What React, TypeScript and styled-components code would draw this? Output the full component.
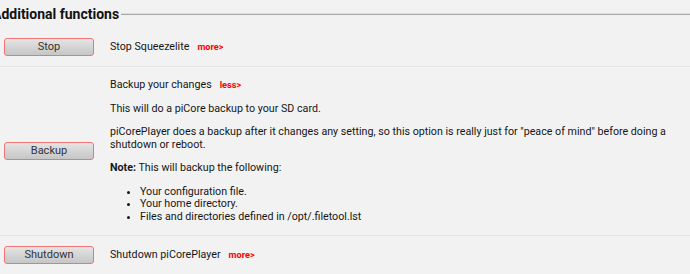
import React from "react";
import styled, { createGlobalStyle } from "styled-components";

const Global = createGlobalStyle`
  html, body { margin: 0; padding: 0; background: #f2f2f2; }
  body { font-family: Roboto, "Liberation Sans", Arial, sans-serif; color: #1a1a1a; overflow: hidden; }
`;

const Page = styled.div`
  width: 690px;
  height: 274px;
  overflow: hidden;
`;

const Header = styled.div`
  display: flex;
  align-items: center;
  height: 28px;
`;

const Title = styled.h2`
  margin: 0 0 0 -8px;
  font-size: 14px;
  font-weight: 700;
  color: #111;
  white-space: nowrap;
  line-height: 28px;
`;

const Rule = styled.div`
  flex: 1;
  margin-left: 2px;
  height: 0;
  border-top: 1px solid #dcdcdc;
  border-bottom: 1px solid #aaaaaa;
`;

const Row = styled.div<{ $first?: boolean }>`
  display: grid;
  grid-template-columns: 110px 1fr;
  align-items: center;
  padding: 10px 0;
  border-top: ${(p) => (p.$first ? "none" : "1px solid #e4e4e4")};
`;

const ButtonCell = styled.div`
  padding-left: 4px;
  display: flex;
  align-items: center;
`;

const Btn = styled.button`
  width: 90px;
  height: 18px;
  padding: 0;
  border: 1px solid #f07474;
  border-radius: 3px;
  background: linear-gradient(#e4e4e4, #c6c6c6);
  font-family: Roboto, "Liberation Sans", Arial, sans-serif;
  font-size: 11px;
  color: #333;
  line-height: 16px;
`;

const Text = styled.div`
  font-size: 10.7px;
  line-height: 12.5px;
  color: #161616;
`;

const Details = styled(Text)`
  padding: 2px 0;
`;

const Para = styled.p`
  margin: 11px 0 0;
  &:first-child { margin-top: 0; }
`;

const More = styled.span`
  margin-left: 8px;
  color: #ff0000;
  font-weight: 700;
  font-size: 9.2px;
`;

const List = styled.ul`
  margin: 11px 0 0;
  padding-left: 30px;
`;

export default function App() {
  return (
    <Page>
      <Global />
      <Header>
        <Title>Additional functions</Title>
        <Rule />
      </Header>
      <Row $first>
        <ButtonCell>
          <Btn>Stop</Btn>
        </ButtonCell>
        <Text>
          Stop Squeezelite<More>more&gt;</More>
        </Text>
      </Row>
      <Row>
        <ButtonCell>
          <Btn>Backup</Btn>
        </ButtonCell>
        <Details>
          <Para>
            Backup your changes<More>less&gt;</More>
          </Para>
          <Para>This will do a piCore backup to your SD card.</Para>
          <Para>
            piCorePlayer does a backup after it changes any setting, so this option is really just for "peace of mind" before doing a shutdown or reboot.
          </Para>
          <Para>
            <b>Note:</b> This will backup the following:
          </Para>
          <List>
            <li>Your configuration file.</li>
            <li>Your home directory.</li>
            <li>Files and directories defined in /opt/.filetool.lst</li>
          </List>
        </Details>
      </Row>
      <Row>
        <ButtonCell>
          <Btn>Shutdown</Btn>
        </ButtonCell>
        <Text>
          Shutdown piCorePlayer<More>more&gt;</More>
        </Text>
      </Row>
    </Page>
  );
}
